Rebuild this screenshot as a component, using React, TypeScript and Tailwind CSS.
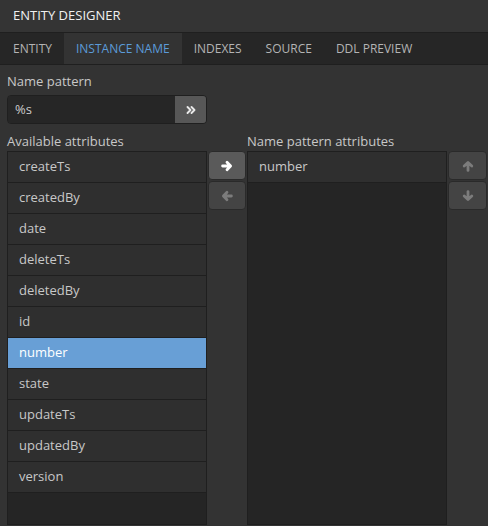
import React from "react";

const available = [
  "createTs",
  "createdBy",
  "date",
  "deleteTs",
  "deletedBy",
  "id",
  "number",
  "state",
  "updateTs",
  "updatedBy",
  "version",
];

const tabs = ["ENTITY", "INSTANCE NAME", "INDEXES", "SOURCE", "DDL PREVIEW"];

function Arrow({ rotate }: { rotate: number }) {
  return (
    <svg width="12" height="12" viewBox="0 0 12 12" style={{ transform: `rotate(${rotate}deg)` }}>
      <path
        d="M1.6 6 H9.2 M6 2.2 L9.6 6 L6 9.8"
        fill="none"
        stroke="currentColor"
        strokeWidth="2.8"
        strokeLinecap="round"
        strokeLinejoin="round"
      />
    </svg>
  );
}

function DoubleAngle() {
  return (
    <svg width="10" height="10" viewBox="0 0 10 10">
      <path
        d="M1.5 2 L4.5 5 L1.5 8 M5.5 2 L8.5 5 L5.5 8"
        fill="none"
        stroke="currentColor"
        strokeWidth="1.9"
        strokeLinecap="round"
        strokeLinejoin="round"
      />
    </svg>
  );
}

function SideButton({ enabled, children }: { enabled?: boolean; children: React.ReactNode }) {
  return (
    <div
      className={
        "flex h-[29px] items-center justify-center rounded-[4px] border border-[#2a2a2a] " +
        (enabled ? "bg-[#5a5a5a] text-white" : "bg-[#444444] text-[#7c7c7c]")
      }
    >
      {children}
    </div>
  );
}

export default function App() {
  return (
    <div
      className="flex h-[526px] w-[488px] flex-col bg-[#333333] text-[#cccccc]"
      style={{ fontFamily: '"Open Sans", "Noto Sans", sans-serif' }}
    >
      <div className="flex h-[33px] items-center border-b border-[#1f1f1f] bg-[#343434] pl-[13px] text-[13px] text-[#f0f0f0]">
        ENTITY DESIGNER
      </div>
      <div className="flex h-[32px] items-stretch border-b border-[#1f1f1f] bg-[#262626] pl-px text-[12px]">
        {tabs.map((t) => (
          <div
            key={t}
            className={
              "flex items-center px-[12px] " +
              (t === "INSTANCE NAME" ? "bg-[#333333] text-[#5b9bd9]" : "text-[#b4b4b4]")
            }
          >
            {t}
          </div>
        ))}
      </div>
      <div className="flex min-h-0 flex-1 flex-col pb-px pl-[7px] pt-[7px]">
        <div className="h-[18px] text-[13px] leading-[18px] text-[#c8c8c8]">Name pattern</div>
        <div className="mt-[5px] flex h-[29px] w-[200px] overflow-hidden rounded-[4px] border border-[#1f1f1f]">
          <div className="flex flex-1 items-center bg-[#262626] pl-[7px] text-[13px] text-[#cccccc]">%s</div>
          <div className="flex w-[31px] items-center justify-center bg-[#575757] text-[#e8e8e8]">
            <DoubleAngle />
          </div>
        </div>
        <div className="mt-[8px] flex min-h-0 flex-1">
          <div className="flex w-[200px] flex-col">
            <div className="h-[19px] text-[13px] leading-[18px] text-[#c8c8c8]">Available attributes</div>
            <div className="flex flex-1 flex-col border border-[#1f1f1f] bg-[#252525]">
              {available.map((a) => (
                <div
                  key={a}
                  className={
                    "flex h-[31px] shrink-0 items-center border-b border-[#1f1f1f] pl-[11px] text-[13px] " +
                    (a === "number" ? "bg-[#689fd6] text-white" : "bg-[#2f2f2f] text-[#c8c8c8]")
                  }
                >
                  {a}
                </div>
              ))}
            </div>
          </div>
          <div className="ml-px flex w-[38px] flex-col gap-[1px] pt-[19px]">
            <SideButton enabled>
              <Arrow rotate={0} />
            </SideButton>
            <SideButton>
              <Arrow rotate={180} />
            </SideButton>
          </div>
          <div className="ml-px flex w-[200px] flex-col">
            <div className="h-[19px] text-[13px] leading-[18px] text-[#c8c8c8]">Name pattern attributes</div>
            <div className="flex flex-1 flex-col border border-[#1f1f1f] bg-[#252525]">
              <div className="flex h-[31px] shrink-0 items-center border-b border-[#1f1f1f] bg-[#2f2f2f] pl-[11px] text-[13px] text-[#c8c8c8]">
                number
              </div>
            </div>
          </div>
          <div className="ml-px flex w-[39px] flex-col gap-[1px] pt-[19px]">
            <SideButton>
              <Arrow rotate={-90} />
            </SideButton>
            <SideButton>
              <Arrow rotate={90} />
            </SideButton>
          </div>
        </div>
      </div>
    </div>
  );
}
